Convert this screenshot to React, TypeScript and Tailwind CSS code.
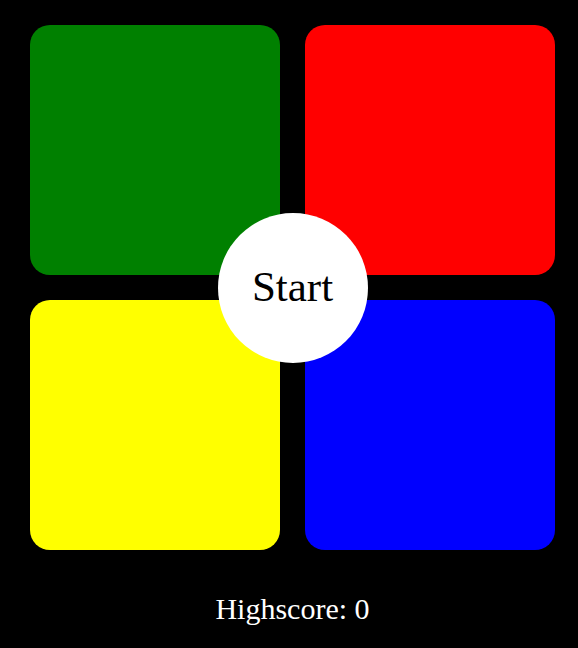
export default function App() {
  return (
    <div className="min-h-[648px] w-full bg-black pt-[25px] font-['Liberation_Serif',serif]">
      <div className="relative ml-[30px] w-[525px]">
        <div className="grid grid-cols-[250px_250px] gap-[25px]">
          <div className="h-[250px] rounded-[20px] bg-[#008000]" />
          <div className="h-[250px] rounded-[20px] bg-[#ff0000]" />
          <div className="h-[250px] rounded-[20px] bg-[#ffff00]" />
          <div className="h-[250px] rounded-[20px] bg-[#0000ff]" />
        </div>
        <button className="absolute left-[187.5px] top-[187.5px] flex h-[150px] w-[150px] items-center justify-center rounded-full bg-white text-[43px] text-black">
          Start
        </button>
      </div>
      <p className="mt-[42px] ml-[30px] w-[525px] text-center text-[30px] leading-[34px] text-white">
        Highscore: 0
      </p>
    </div>
  )
}
